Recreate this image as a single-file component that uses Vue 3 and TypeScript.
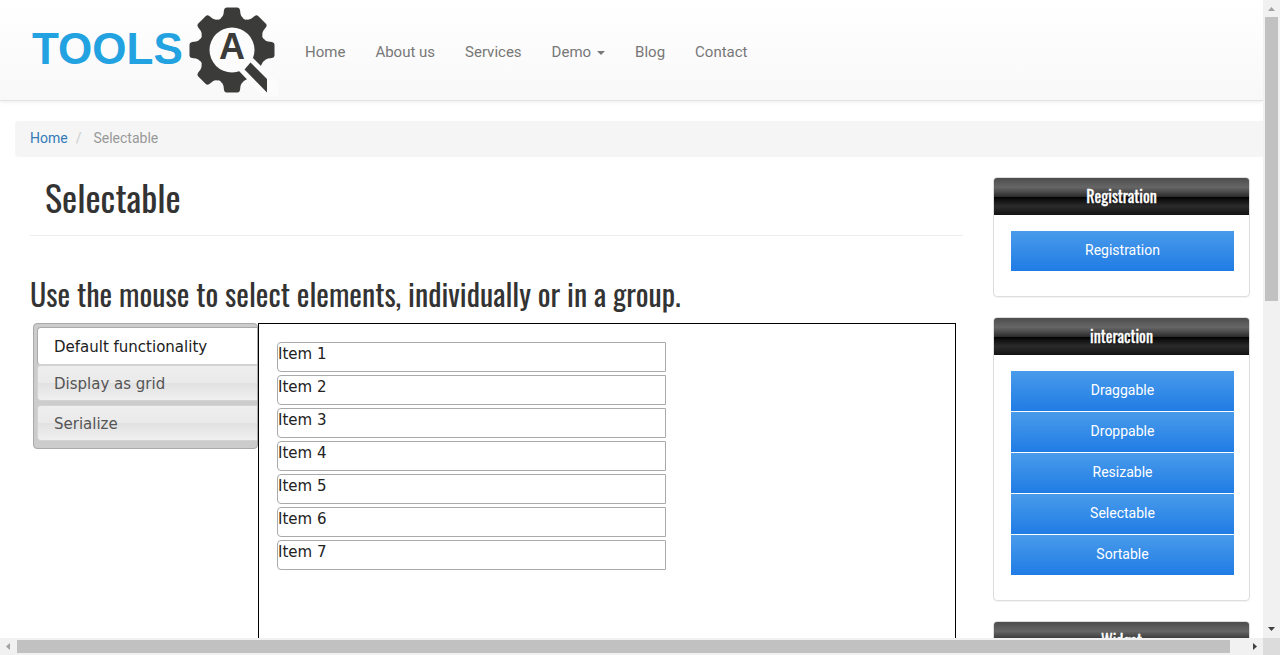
<script setup lang="ts">
import { ref } from 'vue'

interface NavItem {
  label: string
  dropdown?: boolean
}

interface Panel {
  title: string
  links: string[]
}

const navItems: NavItem[] = [
  { label: 'Home' },
  { label: 'About us' },
  { label: 'Services' },
  { label: 'Demo', dropdown: true },
  { label: 'Blog' },
  { label: 'Contact' },
]

const tabs: string[] = ['Default functionality', 'Display as grid', 'Serialize']
const activeTab = ref<number>(0)

const items: string[] = Array.from({ length: 7 }, (_, i) => `Item ${i + 1}`)

const panels: Panel[] = [
  { title: 'Registration', links: ['Registration'] },
  { title: 'interaction', links: ['Draggable', 'Droppable', 'Resizable', 'Selectable', 'Sortable'] },
  { title: 'Widget', links: [] },
]

const gearTeeth: number[] = [0, 90, 135, 180, 225, 270, 315]
</script>

<template>
  <div class="window">
    <div class="viewport">
      <header class="navbar">
        <a class="brand" href="#" aria-label="Tools QA">
          <svg class="logo" viewBox="0 0 250 92" role="img" aria-hidden="true">
            <text class="wordmark" x="4" y="60">TOOLS</text>
            <g transform="translate(204 46)">
              <g class="gear">
                <circle r="33" />
                <path
                  v-for="angle in gearTeeth"
                  :key="angle"
                  :transform="`rotate(${angle})`"
                  d="M28 -14 L32 -11 Q33.500 -9 36 -8.500 L40 -8 Q42.500 -7.500 42.500 -5.500 V5.500 Q42.500 7.500 40 8 L36 8.500 Q33.500 9 32 11 L28 14 Z"
                />
              </g>
              <circle class="lens" r="22.500" />
              <path class="lens" d="M15 15 L21 8 L46 33 V46 H31 L7 21 Z" />
              <path class="gear" d="M18.500 12.500 L35 29 V42.500 L12.500 19.500 Z" />
              <text class="letter" x="0" y="9" text-anchor="middle">A</text>
            </g>
          </svg>
        </a>
        <nav>
          <ul class="nav">
            <li v-for="item in navItems" :key="item.label">
              <a href="#">{{ item.label }}<span v-if="item.dropdown" class="caret"></span></a>
            </li>
          </ul>
        </nav>
      </header>

      <nav class="breadcrumb" aria-label="Breadcrumb">
        <a href="#">Home</a>
        <span class="slash">/</span>
        <span class="current">Selectable</span>
      </nav>

      <div class="columns">
        <main>
          <h1>Selectable</h1>
          <h2>Use the mouse to select elements, individually or in a group.</h2>
          <div class="tabs">
            <div class="tablist" role="tablist">
              <button
                v-for="(tab, i) in tabs"
                :key="tab"
                type="button"
                role="tab"
                class="tab"
                :class="{ active: i === activeTab }"
                :aria-selected="i === activeTab"
                @click="activeTab = i"
              >
                {{ tab }}
              </button>
            </div>
            <div class="tabpanel" role="tabpanel">
              <ol class="selectable">
                <li v-for="item in items" :key="item">{{ item }}</li>
              </ol>
            </div>
          </div>
        </main>

        <aside>
          <section v-for="panel in panels" :key="panel.title" class="card">
            <h3>{{ panel.title }}</h3>
            <ul>
              <li v-for="link in panel.links" :key="link">
                <a href="#">{{ link }}</a>
              </li>
            </ul>
          </section>
        </aside>
      </div>
    </div>

    <div class="bar vertical" aria-hidden="true">
      <span class="arrow"><svg viewBox="0 0 17 17"><path class="dim" d="M5 11 L8.500 7 L12 11 Z" /></svg></span>
      <span class="track"><span class="thumb"></span></span>
      <span class="arrow"><svg viewBox="0 0 17 17"><path d="M5 6 H12 L8.500 10 Z" /></svg></span>
    </div>
    <div class="bar horizontal" aria-hidden="true">
      <span class="arrow"><svg viewBox="0 0 17 17"><path class="dim" d="M10 5 V12 L6 8.500 Z" /></svg></span>
      <span class="track"><span class="thumb"></span></span>
      <span class="arrow"><svg viewBox="0 0 17 17"><path d="M7 5 V12 L11 8.500 Z" /></svg></span>
    </div>
    <div class="corner"></div>
  </div>
</template>

<style>
body {
  margin: 0;
  background: #fff;
}
</style>

<style scoped>
* {
  box-sizing: border-box;
}

ul,
ol {
  list-style: none;
  margin: 0;
  padding: 0;
}

a {
  text-decoration: none;
}

.window {
  display: grid;
  grid-template-columns: minmax(0, 1fr) 17px;
  grid-template-rows: minmax(0, 1fr) 17px;
  height: 100vh;
  font-family: Roboto, "Liberation Sans", sans-serif;
  font-size: 14px;
  line-height: 20px;
  color: #333;
}

.viewport {
  overflow: hidden;
}

.navbar {
  display: flex;
  align-items: center;
  padding: 4px 0 4px 28px;
  background: linear-gradient(#fff, #f8f8f8);
  border-bottom: 1px solid #e3e3e3;
  box-shadow: 0 1px 4px rgba(0, 0, 0, 0.08);
}

.brand,
.logo {
  display: block;
}

.logo {
  width: 250px;
  height: 92px;
}

.wordmark {
  font: bold 44px "Liberation Sans", sans-serif;
  fill: #22a2e0;
}

.letter {
  font: bold 36px "Liberation Sans", sans-serif;
  fill: #3b3b3a;
}

.gear {
  fill: #3b3b3a;
}

.lens {
  fill: #fcfcfc;
}

.nav {
  display: flex;
  padding: 4px 0 0 12px;
}

.nav a {
  display: flex;
  align-items: center;
  padding: 15px;
  font-size: 15px;
  color: #777;
}

.caret {
  margin: 2px 0 0 6px;
  border: 4px solid transparent;
  border-top-color: #777;
  border-bottom: 0;
}

.breadcrumb {
  display: flex;
  margin: 20px 0 0 15px;
  padding: 7px 15px 9px;
  background: #f5f5f5;
  border-radius: 4px 0 0 4px;
}

.breadcrumb a {
  color: #337ab7;
}

.slash {
  padding: 0 12px 0 8px;
  color: #ccc;
}

.current {
  color: #999;
}

.columns {
  display: grid;
  grid-template-columns: minmax(0, 1fr) 257px;
  gap: 30px;
  padding: 20px 13px 0 30px;
}

h1,
h2,
h3 {
  margin: 0;
  font-family: Oswald, "Liberation Sans Narrow", "Arial Narrow", "DejaVu Sans Condensed", sans-serif;
  font-weight: 400;
}

h1 {
  padding: 0 15px 18px;
  font-size: 36px;
  line-height: 40px;
  border-bottom: 1px solid #eee;
}

h2 {
  margin: 38px 0 9px;
  font-size: 30px;
  line-height: 40px;
  white-space: nowrap;
}

.tabs {
  display: grid;
  grid-template-columns: 225px minmax(0, 1fr);
  align-items: start;
  margin: 0 7px 0 3px;
  font-family: Verdana, "DejaVu Sans", sans-serif;
  font-size: 15px;
  color: #222;
}

.tablist {
  display: flex;
  flex-direction: column;
  gap: 4px;
  padding: 3px 0 7px 3px;
  background: #ccc;
  border: 1px solid #aaa;
  border-radius: 4px;
}

.tab {
  height: 36px;
  padding: 2px 16px 0;
  font: inherit;
  text-align: left;
  color: #555;
  background: linear-gradient(#eee, #eaeaea 50%, #e1e1e1 50%, #f0f0f0);
  border: 1px solid #d3d3d3;
  border-right: 0;
  border-radius: 4px 0 0 4px;
}

.tab.active {
  height: 38px;
  margin-bottom: -4px;
  color: #212121;
  background: #fff;
  border-color: #aaa;
  border-bottom-color: #d3d3d3;
}

.tabpanel {
  min-height: 480px;
  padding: 18px;
  border: 1px solid #000;
}

.selectable {
  display: grid;
  gap: 3px;
  width: 59%;
}

.selectable li {
  height: 30px;
  padding-top: 1px;
  border: 1px solid #aaa;
  border-radius: 4px 0 0 4px;
}

aside {
  display: grid;
  align-content: start;
  gap: 20px;
}

.card {
  border: 1px solid #ddd;
  border-radius: 4px;
  box-shadow: 0 1px 1px rgba(0, 0, 0, 0.05);
  overflow: hidden;
}

.card h3 {
  font-size: 16px;
  line-height: 37px;
  text-align: center;
  color: #fff;
  -webkit-text-stroke: 0.3px #fff;
  background: linear-gradient(#4c4c4c, #595959 12%, #666 25%, #474747 39%, #2c2c2c 50%, #000 51%, #111 60%, #2b2b2b 76%, #1c1c1c 91%, #131313);
}

.card ul {
  display: grid;
  gap: 1px;
  padding: 16px 15px 25px 17px;
}

.card a {
  display: block;
  height: 40px;
  line-height: 38px;
  text-align: center;
  color: #fff;
  background: linear-gradient(#499bea, #207ce5);
}

.bar {
  display: flex;
  background: #f1f1f1;
}

.vertical {
  flex-direction: column;
}

.arrow {
  flex: 0 0 17px;
  height: 17px;
}

.arrow svg {
  display: block;
  width: 17px;
  height: 17px;
  fill: #404040;
}

.arrow .dim {
  fill: #a3a3a3;
}

.track {
  flex: 1;
  min-width: 0;
  min-height: 0;
}

.thumb {
  display: block;
  background: #c1c1c1;
}

.vertical .thumb {
  height: 47%;
  margin: 0 2px;
}

.horizontal .track {
  padding: 2px 0;
}

.horizontal .thumb {
  width: 98.7%;
  height: 13px;
}

.corner {
  background: #dcdcdc;
}
</style>
